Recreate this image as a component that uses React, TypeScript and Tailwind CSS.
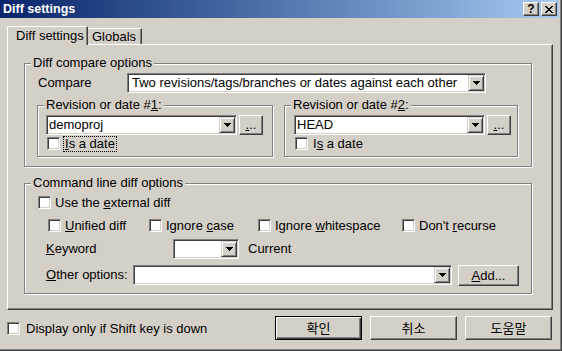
import React from 'react';
import clsx from 'clsx';

const cn = (...a: Parameters<typeof clsx>) => clsx(...a);

// ── bevels ────────────────────────────────────────────────────────────────
const raised =
  'bg-[#d4d0c8] border border-t-white border-l-white border-r-[#404040] border-b-[#404040] shadow-[inset_-1px_-1px_0_#808080]';
const arrowBtn =
  'bg-[#d4d0c8] border border-t-[#d4d0c8] border-l-[#d4d0c8] border-r-[#404040] border-b-[#404040] shadow-[inset_1px_1px_0_#fff,inset_-1px_-1px_0_#808080]';
const sunken =
  'bg-white border border-t-[#808080] border-l-[#808080] border-b-white border-r-white shadow-[inset_1px_1px_0_#404040,inset_-1px_-1px_0_#d4d0c8]';
const etched = 'relative border border-[#808080] shadow-[inset_1px_1px_0_#fff,1px_1px_0_#fff]';

function Arrow() {
  return (
    <svg width="7" height="4" viewBox="0 0 7 4" shapeRendering="crispEdges">
      <path d="M0 0h7v1h-1v1h-1v1h-1v1h-1v-1h-1v-1h-1v-1h-1z" fill="#000" />
    </svg>
  );
}

function Combo({ value, className }: { value?: string; className: string }) {
  return (
    <div className={cn('h-[20px] flex p-[1px]', sunken, className)}>
      <span className="flex-1 pl-[1px] leading-[16px] whitespace-nowrap overflow-hidden">{value}</span>
      <span className={cn('w-[16px] h-[16px] flex items-center justify-center flex-none', arrowBtn)}>
        <Arrow />
      </span>
    </div>
  );
}

function Check({ label, className }: { label: React.ReactNode; className?: string }) {
  return (
    <div className={cn('flex items-center h-[13px]', className)}>
      <span className={cn('w-[13px] h-[13px] flex-none', sunken)} />
      <span className="ml-[4px] leading-[15px] whitespace-nowrap">{label}</span>
    </div>
  );
}

function Group({
  title,
  className,
  children,
}: {
  title: React.ReactNode;
  className: string;
  children?: React.ReactNode;
}) {
  return (
    <div className={cn(etched, className)}>
      <span className="absolute -top-[9px] left-[6px] px-[2px] bg-[#d4d0c8] leading-[15px] whitespace-nowrap">
        {title}
      </span>
      {children}
    </div>
  );
}

function DotsBtn() {
  return (
    <div className={cn('ml-[2px] w-[24px] h-[20px] flex items-center justify-center leading-[15px]', raised)}>
      <span className="-mt-[2px]">
        <u>.</u>..
      </span>
    </div>
  );
}

function PushBtn({ children, isDefault }: { children: React.ReactNode; isDefault?: boolean }) {
  return (
    <div
      className={cn(
        'w-[87px] h-[24px] flex items-center justify-center bg-[#d4d0c8] font-["Noto_Sans_CJK_KR",sans-serif] text-[13px]',
        isDefault
          ? 'border border-black shadow-[inset_1px_1px_0_#fff,inset_-1px_-1px_0_#404040,inset_-2px_-2px_0_#808080]'
          : raised,
      )}
    >
      {children}
    </div>
  );
}

// ── App ───────────────────────────────────────────────────────────────────

export default function App() {
  return (
    <div className="w-[562px] h-[351px] bg-[#d4d0c8] overflow-hidden flex flex-col shadow-[inset_-1px_-1px_0_#404040,inset_-2px_-2px_0_#808080] font-['Liberation_Sans','Noto_Sans_CJK_KR',sans-serif] text-[13px] text-black">
      {/* title bar */}
      <div className="w-[559px] h-[18px] flex-none flex items-center justify-between pl-[3px] pr-[2px] bg-linear-to-r from-[#0a246a] to-[#a6caf0]">
        <span className="text-white font-bold text-[12.5px] leading-[18px]">Diff settings</span>
        <div className="flex gap-[2px]">
          <span className={cn('w-[16px] h-[14px] flex items-center justify-center font-bold text-[12px] leading-[12px]', raised)}>
            ?
          </span>
          <span className={cn('w-[16px] h-[14px] flex items-center justify-center', raised)}>
            <svg width="8" height="7" viewBox="0 0 8 7" shapeRendering="crispEdges">
              <path
                d="M0 0h2v1h1v1h2v-1h1v-1h2v1h-1v1h-1v1h-1v1h1v1h1v1h1v1h-2v-1h-1v-1h-2v1h-1v1h-2v-1h1v-1h1v-1h1v-1h-1v-1h-1v-1h-1z"
                fill="#000"
              />
            </svg>
          </span>
        </div>
      </div>

      {/* tabs */}
      <div className="ml-[7px] mt-[8px] h-[18px] flex items-end relative z-10">
        <div className="w-[81px] h-[19px] -mb-[1px] bg-[#d4d0c8] border-l border-t border-r border-l-white border-t-white border-r-[#404040] shadow-[inset_-1px_0_0_#808080] rounded-tl-[2px] pl-[8px] leading-[17px]">
          Diff settings
        </div>
        <div className="w-[54px] h-[16px] bg-[#d4d0c8] border-t border-r border-t-white border-r-[#404040] shadow-[inset_-1px_0_0_#808080] pl-[4px] leading-[15px]">
          Globals
        </div>
      </div>

      {/* tab panel */}
      <div className="ml-[7px] w-[546px] h-[266px] flex-none flex flex-col border border-t-white border-l-white border-r-[#404040] border-b-[#404040] shadow-[inset_-1px_-1px_0_#808080]">
        <Group title="Diff compare options" className="ml-[16px] mt-[18px] w-[508px] h-[104px] flex flex-col">
          <div className="mt-[9px] flex items-center">
            <span className="ml-[13px] w-[89px]">Compare</span>
            <Combo
              className="w-[359px] pl-[3px]"
              value="Two revisions/tags/branches or dates against each other"
            />
          </div>
          <div className="mt-[12px] ml-[12px] flex">
            <Group
              title={
                <>
                  Revision or date #<u>1</u>:
                </>
              }
              className="w-[236px] h-[52px] flex flex-col"
            >
              <div className="mt-[9px] ml-[8px] flex">
                <Combo className="w-[191px]" value="demoproj" />
                <DotsBtn />
              </div>
              <div className="mt-[2px] ml-[9px] flex items-center h-[13px]">
                <span className={cn('w-[13px] h-[13px] flex-none', sunken)} />
                <span className="ml-[3px] px-[1px] leading-[14px] border border-dotted border-black">
                  <u>I</u>s a date
                </span>
              </div>
            </Group>
            <Group
              title={
                <>
                  Revision or date #<u>2</u>:
                </>
              }
              className="ml-[11px] w-[234px] h-[52px] flex flex-col"
            >
              <div className="mt-[9px] ml-[9px] flex">
                <Combo className="w-[191px]" value="HEAD" />
                <DotsBtn />
              </div>
              <Check
                className="mt-[2px] ml-[10px]"
                label={
                  <span className="ml-[1px]">
                    I<u>s</u> a date
                  </span>
                }
              />
            </Group>
          </div>
        </Group>

        <Group title="Command line diff options" className="ml-[16px] mt-[16px] w-[508px] h-[111px] flex flex-col">
          <Check
            className="mt-[12px] ml-[13px]"
            label={
              <>
                Use the <u>e</u>xternal diff
              </>
            }
          />
          <div className="mt-[10px] ml-[23px] flex">
            <Check
              className="w-[101px]"
              label={
                <>
                  <u>U</u>nified diff
                </>
              }
            />
            <Check
              className="w-[109px]"
              label={
                <>
                  Ignore <u>c</u>ase
                </>
              }
            />
            <Check
              className="w-[144px]"
              label={
                <>
                  Ignore <u>w</u>hitespace
                </>
              }
            />
            <Check
              label={
                <>
                  Don't <u>r</u>ecurse
                </>
              }
            />
          </div>
          <div className="mt-[7px] flex items-center">
            <span className="ml-[21px] w-[127px]">
              <u>K</u>eyword
            </span>
            <Combo className="w-[66px]" />
            <span className="ml-[9px]">Current</span>
          </div>
          <div className="mt-[6px] flex items-start">
            <span className="ml-[21px] w-[87px] leading-[20px]">
              <u>O</u>ther options:
            </span>
            <Combo className="w-[319px]" />
            <div className={cn('ml-[6px] w-[61px] h-[21px] flex items-center justify-center', raised)}>
              <span>
                <u>A</u>dd...
              </span>
            </div>
          </div>
        </Group>
      </div>

      {/* bottom row */}
      <div className="mt-[6px] pl-[7px] pr-[10px] flex items-center h-[24px]">
        <Check className="flex-1" label={<span className="ml-[2px]">Display only if Shift key is down</span>} />
        <div className="flex gap-[8px]">
          <PushBtn isDefault>확인</PushBtn>
          <PushBtn>취소</PushBtn>
          <PushBtn>도움말</PushBtn>
        </div>
      </div>
    </div>
  );
}
